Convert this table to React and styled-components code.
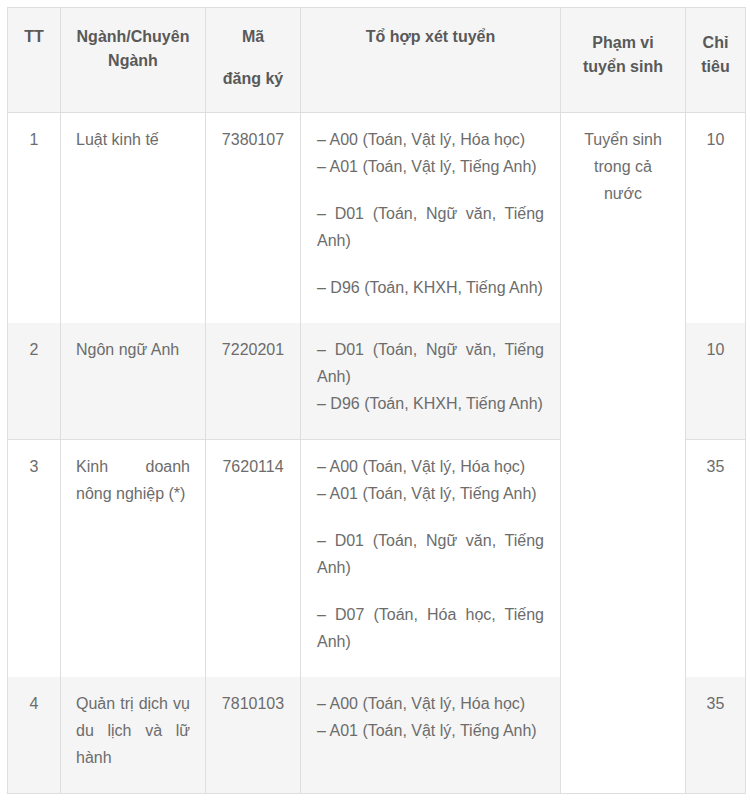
import React from 'react'
import styled, { createGlobalStyle } from 'styled-components'

const Global = createGlobalStyle`
  body {
    margin: 0;
    background: #fff;
    font-family: "Liberation Sans", Arial, sans-serif;
  }
`

// outer spacing round the table
const Page = styled.div`
  padding: 7px 5px 10px 7px;
`

const Table = styled.table`
  width: 738px;
  border-collapse: collapse;
  table-layout: fixed;
  border: 1px solid #dedede;
  color: #6c6c6c;
  font-size: 16px;
`

const Th = styled.th`
  background: #f5f5f5;
  border-left: 1px solid #dedede;
  border-bottom: 1px solid #dedede;
  vertical-align: top;
  text-align: center;
  font-weight: bold;
  color: #595959;
  line-height: 24px;
  padding: ${props => (props.$low ? '23px 15px 3px' : '17px 15px 3px')};
  p {
    margin: 0 0 18px;
  }
`

// body rows: gray fill on even rows, a rule only where the reference has one
const Tr = styled.tr`
  background: ${props => (props.$gray ? '#f5f5f5' : '#fff')};
  border-top: ${props => (props.$rule ? '1px solid #dedede' : 'none')};
`

const Td = styled.td`
  border-left: 1px solid #dedede;
  vertical-align: top;
  line-height: 27px;
  padding: 13px ${props => props.$pad || 15}px 2px;
  text-align: ${props => props.$align || 'left'};
  p {
    margin: 0 0 20px;
  }
`

const Scope = styled(Td)`
  background: #fff;
`

const Row = ({ gray, rule, no, name, code, groups, quota, children }) => (
  <Tr $gray={gray} $rule={rule}>
    <Td $align="center">{no}</Td>
    <Td $align="justify">
      <p>{name}</p>
    </Td>
    <Td $align="center">{code}</Td>
    <Td $align="justify" $pad={16}>
      {groups.map((g, i) => (
        <p key={i}>
          {g.map((line, j) => (
            <React.Fragment key={j}>
              {j > 0 && <br />}
              {line}
            </React.Fragment>
          ))}
        </p>
      ))}
    </Td>
    {children}
    <Td $align="center">{quota}</Td>
  </Tr>
)

export default function App() {
  return (
    <Page>
      <Global />
      <Table>
        <colgroup>
          <col style={{ width: 53 }} />
          <col style={{ width: 145 }} />
          <col style={{ width: 95 }} />
          <col style={{ width: 260 }} />
          <col style={{ width: 125 }} />
          <col style={{ width: 60 }} />
        </colgroup>
        <thead>
          <tr>
            <Th>
              <p>TT</p>
            </Th>
            <Th>
              <p>Ngành/Chuyên Ngành</p>
            </Th>
            <Th>
              <p>Mã</p>
              <p>đăng ký</p>
            </Th>
            <Th>
              <p>Tổ hợp xét tuyển</p>
            </Th>
            <Th $low>
              <p>Phạm vi tuyển sinh</p>
            </Th>
            <Th $low>
              <p>Chỉ tiêu</p>
            </Th>
          </tr>
        </thead>
        <tbody>
          <Row
            no="1"
            name="Luật kinh tế"
            code="7380107"
            quota="10"
            groups={[
              ['– A00 (Toán, Vật lý, Hóa học)', '– A01 (Toán, Vật lý, Tiếng Anh)'],
              ['– D01 (Toán, Ngữ văn, Tiếng Anh)'],
              ['– D96 (Toán, KHXH, Tiếng Anh)'],
            ]}
          >
            <Scope rowSpan={4} $align="center">
              <p>Tuyển sinh trong cả nước</p>
            </Scope>
          </Row>
          <Row
            gray
            no="2"
            name="Ngôn ngữ Anh"
            code="7220201"
            quota="10"
            groups={[['– D01 (Toán, Ngữ văn, Tiếng Anh)', '– D96 (Toán, KHXH, Tiếng Anh)']]}
          />
          <Row
            rule
            no="3"
            name="Kinh doanh nông nghiệp (*)"
            code="7620114"
            quota="35"
            groups={[
              ['– A00 (Toán, Vật lý, Hóa học)', '– A01 (Toán, Vật lý, Tiếng Anh)'],
              ['– D01 (Toán, Ngữ văn, Tiếng Anh)'],
              ['– D07 (Toán, Hóa học, Tiếng Anh)'],
            ]}
          />
          <Row
            gray
            no="4"
            name="Quản trị dịch vụ du lịch và lữ hành"
            code="7810103"
            quota="35"
            groups={[['– A00 (Toán, Vật lý, Hóa học)', '– A01 (Toán, Vật lý, Tiếng Anh)']]}
          />
        </tbody>
      </Table>
    </Page>
  )
}
